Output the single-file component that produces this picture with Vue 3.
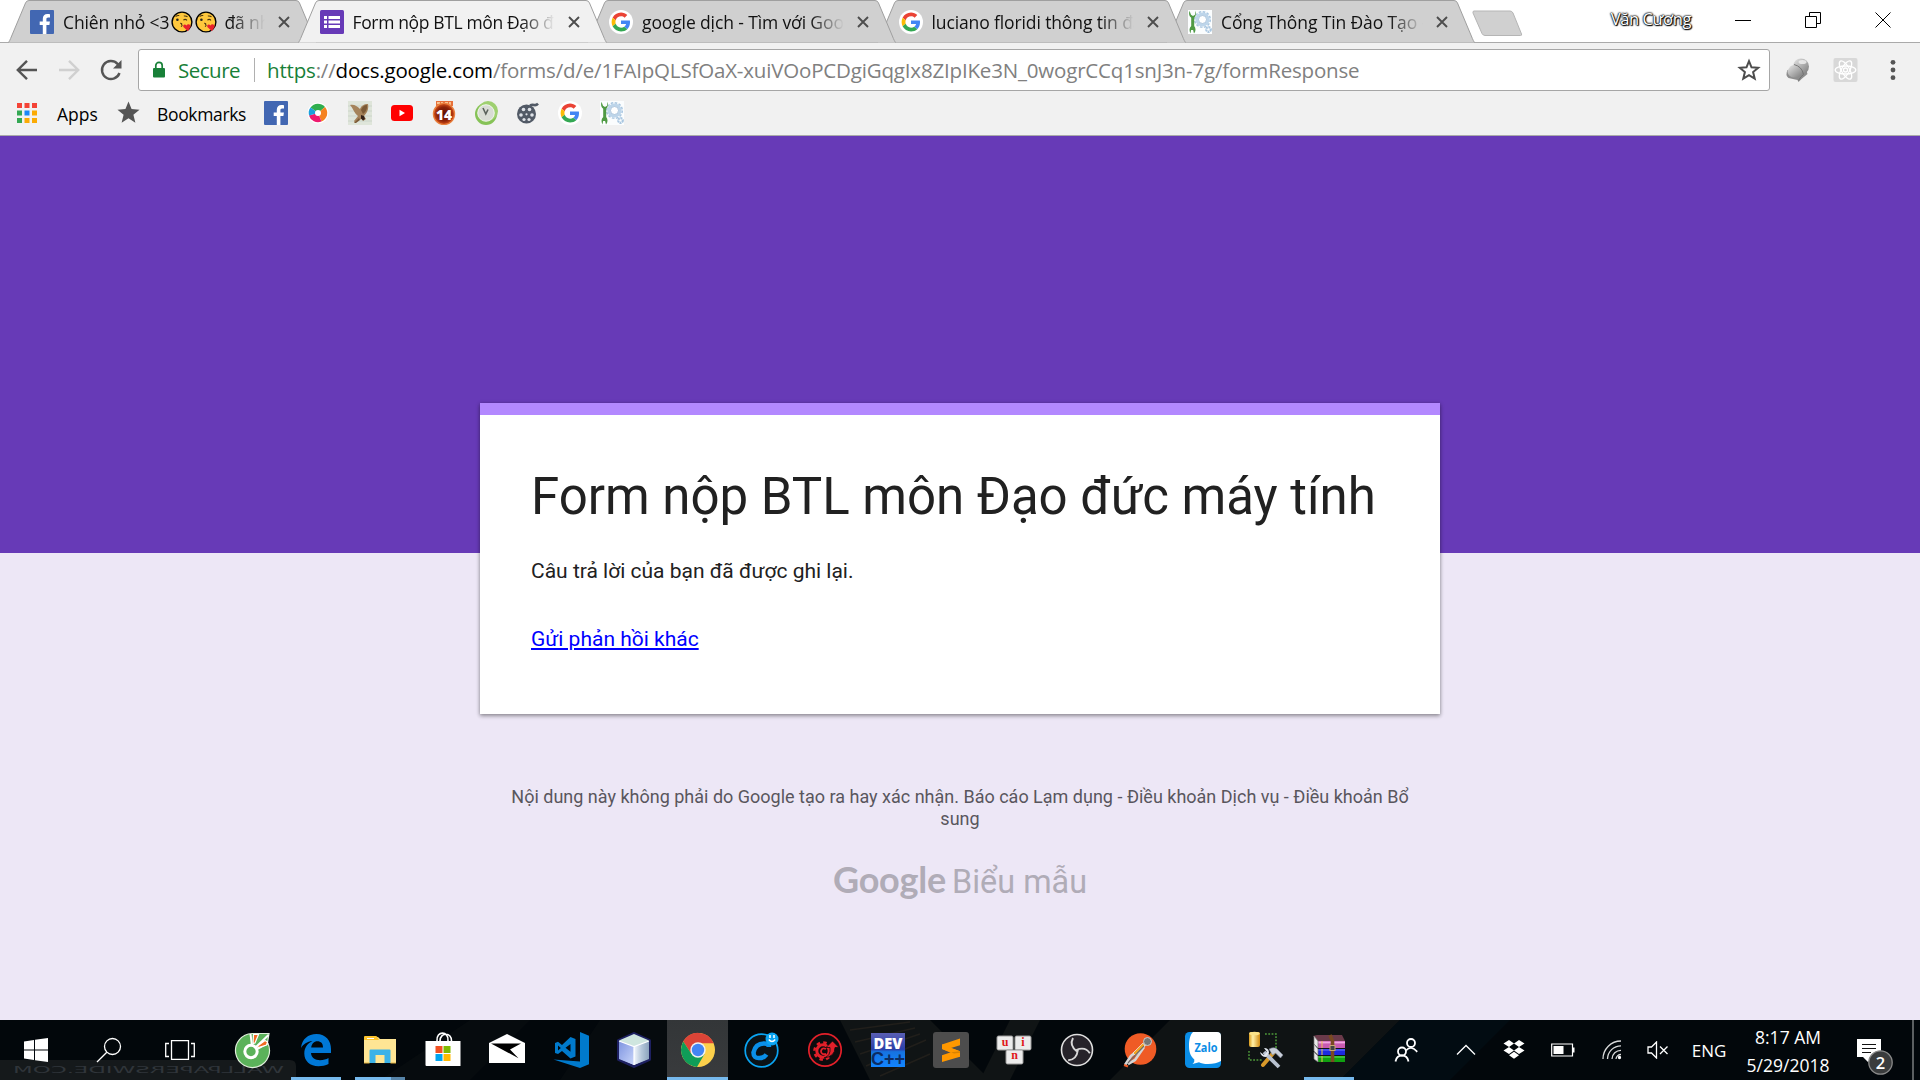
<script setup>
const tabs = [
  { id: 'fb', icon: 'i-facebook', title: 'Chiên nhỏ <3', emoji: true, rest: 'đã nhắc đến' },
  { id: 'form', icon: 'i-form', title: 'Form nộp BTL môn Đạo đức', active: true },
  { id: 'gd', icon: 'i-google', title: 'google dịch - Tìm với Google' },
  { id: 'lf', icon: 'i-google', title: 'luciano floridi thông tin đạo' },
  { id: 'ct', icon: 'i-wrench', title: 'Cổng Thông Tin Đào Tạo -' },
]
const marks = [
  { icon: 'i-facebook' },
  { icon: 'i-pinwheel' },
  { icon: 'i-eagle' },
  { icon: 'i-youtube' },
  { icon: 'i-fourteen', labels: [{ cls: 'l-14', t: '14', at: { x: 12, y: 18.5, textLength: 16, lengthAdjust: 'spacingAndGlyphs' } }] },
  { icon: 'i-vclock' },
  { icon: 'i-reel' },
  { icon: 'i-google' },
  { icon: 'i-wrench' },
]
const apps = [
  { icon: 'a-coccoc' },
  { icon: 'a-edge', run: true },
  { icon: 'a-explorer', run: true, multi: true },
  { icon: 'a-store' },
  { icon: 'a-mail' },
  { icon: 'a-vscode' },
  { icon: 'a-cube' },
  { icon: 'a-chrome', run: true, focus: true },
  { icon: 'a-cfree' },
  { icon: 'a-redgear' },
  {
    icon: 'a-dev',
    labels: [
      { cls: 'l-dev', t: 'DEV', at: { x: 19, y: 17.5, textLength: 29, lengthAdjust: 'spacingAndGlyphs' } },
      { cls: 'l-cpp', t: 'C++', at: { x: 19, y: 34, textLength: 34, lengthAdjust: 'spacingAndGlyphs' } },
    ],
  },
  { icon: 'a-sublime' },
  {
    icon: 'a-unikey',
    labels: [
      { cls: 'l-key', t: 'u', at: { x: 10, y: 14.5 } },
      { cls: 'l-key', t: 'i', at: { x: 28, y: 14.5 } },
      { cls: 'l-key', t: 'n', at: { x: 19.5, y: 28 } },
    ],
  },
  { icon: 'a-obs' },
  { icon: 'a-postman' },
  { icon: 'a-zalo', labels: [{ cls: 'l-zalo', t: 'Zalo', at: { x: 22, y: 21, textLength: 23, lengthAdjust: 'spacingAndGlyphs' } }] },
  { icon: 'a-tools' },
  { icon: 'a-winrar', run: true },
]
</script>

<template>
  <svg class="defs" aria-hidden="true">
    <defs>
      <linearGradient id="g-ball" x1="0" y1="0" x2="1" y2="1"><stop offset="0" stop-color="#e8e8e8" /><stop offset="1" stop-color="#777" /></linearGradient>
      <linearGradient id="g-dev" x1="0" y1="0" x2="0" y2="1"><stop offset="0" stop-color="#5a5fb4" /><stop offset=".48" stop-color="#2b3fa8" /><stop offset=".55" stop-color="#1673e0" /><stop offset="1" stop-color="#1285ff" /></linearGradient>
      <linearGradient id="g-cl" x1="0" y1="0" x2="1" y2="1"><stop offset="0" stop-color="#7e94e0" /><stop offset="1" stop-color="#c9d6fa" /></linearGradient>
      <linearGradient id="g-cr" x1="0" y1="0" x2="1" y2="0"><stop offset="0" stop-color="#f2f7fc" /><stop offset=".5" stop-color="#b5c7da" /><stop offset="1" stop-color="#8ba3bd" /></linearGradient>
      <linearGradient id="g-cyl" x1="0" y1="0" x2="1" y2="0"><stop offset="0" stop-color="#d99a18" /><stop offset=".35" stop-color="#fff0a8" /><stop offset="1" stop-color="#d08a10" /></linearGradient>
      <radialGradient id="g-14"><stop offset="0" stop-color="#5a1206" /><stop offset=".65" stop-color="#8c2208" /><stop offset="1" stop-color="#d9521a" /></radialGradient>
    </defs>
    <symbol id="i-facebook" viewBox="0 0 24 24"><rect width="24" height="24" rx="1" fill="#4267b2" /><path d="M16.400 24V15h3l.5-3.600h-3.500V9.200c0-1.100.4-1.800 1.800-1.800H20V4.200c-.4 0-1.400-.2-2.700-.2-2.700 0-4.500 1.600-4.500 4.700v2.700H9.700V15h3.100v9z" fill="#fff" /></symbol>
    <symbol id="i-form" viewBox="0 0 24 24"><rect width="24" height="24" rx="1.500" fill="#673ab7" /><path d="M4 6h3v3H4zM8.500 6H20v3H8.500zM4 10.500h3v3H4zM8.500 10.500H20v3H8.500zM4 15h3v3H4zM8.500 15H20v3H8.500z" fill="#fff" /></symbol>
    <symbol id="i-google" viewBox="0 0 24 24"><circle cx="12" cy="12" r="12" fill="#fff" /><g transform="translate(2.600 2.600) scale(.392)"><path fill="#ea4335" d="M24 9.500c3.540 0 6.710 1.220 9.210 3.600l6.850-6.850C35.900 2.380 30.470 0 24 0 14.620 0 6.510 5.380 2.560 13.220l7.980 6.190C12.430 13.720 17.740 9.500 24 9.500z" /><path fill="#4285f4" d="M46.980 24.550c0-1.570-.15-3.090-.38-4.550H24v9.020h12.940c-.58 2.960-2.260 5.480-4.780 7.180l7.730 6c4.510-4.180 7.090-10.360 7.090-17.650z" /><path fill="#fbbc05" d="M10.530 28.590c-.48-1.450-.76-2.990-.76-4.590s.27-3.140.76-4.590l-7.980-6.190C.92 16.460 0 20.120 0 24c0 3.880.92 7.540 2.560 10.780l7.970-6.190z" /><path fill="#34a853" d="M24 48c6.480 0 11.930-2.130 15.890-5.810l-7.730-6c-2.150 1.450-4.920 2.300-8.160 2.300-6.260 0-11.570-4.220-13.470-9.910l-7.980 6.190C6.510 42.620 14.620 48 24 48z" /></g></symbol>
    <symbol id="i-wrench" viewBox="0 0 24 24"><rect width="24" height="24" fill="#fbfdfe" /><circle cx="14.500" cy="9.500" r="5.600" fill="none" stroke="#bdd5ea" stroke-width="3" /><circle cx="14.500" cy="9.500" r="7.800" fill="none" stroke="#a9c6e0" stroke-width="1.500" stroke-dasharray="2.600 1.480" /><circle cx="14.500" cy="9.500" r="4" fill="#fff" stroke="#8fb0d0" stroke-width=".7" /><circle cx="20.500" cy="19.500" r="2.300" fill="none" stroke="#a9c6e0" stroke-width="2.200" stroke-dasharray="1.800 .6" /><path d="M1.500.8C.5 4 1.300 6.500 3.200 7.800V16C1.300 17.500.9 20.500 2.500 23.500l.6-3.500h2l.9 3.500c2-2 2-5.500.2-7.500V7.800C8 6.500 8.300 3.200 7 .8v4L5 6 3 4.800z" fill="#4f9a44" /></symbol>
    <symbol id="i-pinwheel" viewBox="0 0 24 24"><circle cx="12" cy="12" r="10.500" fill="#fff" /><path d="M12 12L4.500 6.500A9.300 9.300 0 0 1 19 6z" fill="#2fae4e" /><path d="M12 12l7-6a9.300 9.300 0 0 1-3.500 14.600z" fill="#f58220" /><path d="M12 12l3.500 8.600A9.300 9.300 0 0 1 3 14.500z" fill="#ee1a6e" /><path d="M12 12L3 14.500A9.300 9.300 0 0 1 4.500 6.500z" fill="#1ba0dc" /><circle cx="12" cy="12" r="3" fill="#fff" /></symbol>
    <symbol id="i-eagle" viewBox="0 0 24 24"><rect width="24" height="24" fill="#dfe5da" /><path d="M0 5h24M0 10h24M0 15h24M0 20h24" stroke="#ccd5cb" /><path d="M2 4c4-1 7 1 10 4 1-3 4-5 8-5 1 5-1 9-4 12l2 3-3 2-1-2-3 1-4 3-1-2 4-5C6 12 5 7 2 4z" fill="#a5835a" /><path d="M13 9c1-3 3-5 6-5 .5 4-1 7-4 9zM6 22l5-5 1 2-4 3z" fill="#7b5a36" /><path d="M13 14l3 1 1 3-2 1.500-2-2z" fill="#33221a" /></symbol>
    <symbol id="i-youtube" viewBox="0 0 24 24"><rect x="1" y="4" width="22" height="16" rx="3.500" fill="#f00" /><path d="M9.500 8.800v6.400l5.500-3.200z" fill="#fff" /></symbol>
    <symbol id="i-fourteen" viewBox="0 0 24 24"><rect x="4" width="17" height="5" fill="#e8703a" /><path d="M5 2h3M10 1v4M13 2h3M18 1v3" stroke="#ffe0b0" stroke-width="1.400" /><circle cx="12" cy="13" r="10.600" fill="url(#g-14)" stroke="#e8803e" stroke-width="1.200" /></symbol>
    <symbol id="i-vclock" viewBox="0 0 24 24"><circle cx="12" cy="13" r="11" fill="#86c257" /><circle cx="14" cy="10" r="10" fill="#9fd070" /><circle cx="12" cy="12" r="8.300" fill="#d9dcd5" stroke="#fff" stroke-width=".8" /><path d="M9 7l2.800 6 2.200-4.500" fill="none" stroke="#59605a" stroke-width="1.600" /></symbol>
    <symbol id="i-reel" viewBox="0 0 24 24"><circle cx="10.500" cy="13" r="9.500" fill="#525a66" /><g fill="#dfe3e8"><circle cx="7.500" cy="8.500" r="1.800" /><circle cx="13.500" cy="8.500" r="1.800" /><circle cx="5" cy="14" r="1.800" /><circle cx="16" cy="14" r="1.800" /><circle cx="8" cy="18.500" r="1.600" /><circle cx="13" cy="18.500" r="1.600" /><circle cx="10.500" cy="13.300" r="1.100" /></g><path d="M14 4.500c4-2 5 1.500 8-1.800" fill="none" stroke="#525a66" stroke-width="2.600" /></symbol>
    <symbol id="i-kiss" viewBox="0 0 24 24"><circle cx="12" cy="12" r="10.800" fill="#ffc83d" stroke="#000" stroke-width="1.500" /><circle cx="7" cy="9.500" r="1.400" fill="#222" /><path d="M5 6q2-1.500 4-1M14 5.500q2.500-.5 4 1M13.500 10q2-1.800 4 .2M10 13.500q2.500-.2 1.500 1.400 1.600.7-.6 2.200" fill="none" stroke="#4a3410" stroke-width="1.100" /><path d="M18.500 22l-5-4.500c-1-2.500 1.800-4 3.400-1.600 1.400-2.700 5-1.500 4.400 1.600z" fill="#e8202c" /></symbol>
    <symbol id="i-star" viewBox="0 0 24 24"><path d="M12 .6l3.200 7.800 8.300.600-6.400 5.400 2.100 8.200L12 18.100l-7.200 4.500 2.100-8.200L.5 9l8.300-.6z" /></symbol>

    <symbol id="a-coccoc" viewBox="0 0 38 38"><path d="M19 2.500H36l-1.500 9A17 17 0 1 1 19 2.500z" fill="#5bb25a" stroke="#dfeeda" stroke-width="1.200" /><path d="M17.500 3L19 15M35.500 4L23 16M35 12l-11 6" stroke="#fff" stroke-width="2" /><path d="M20.500 3.500h5L22 12l-2 .5zM32 9.500l2.500 1.500-1 3-8 2.500-1-1.500z" fill="#f26a21" stroke="#fff" stroke-width="1.200" /><circle cx="18" cy="20.500" r="6.200" fill="#5bb25a" stroke="#fff" stroke-width="3" /></symbol>
    <symbol id="a-edge" viewBox="0 0 38 38"><path d="M4 17C5 8 11 3 19.500 3 29 3 34 10 34 18v4H14c.3 5 4.500 7.200 9 7.200 3.500 0 6-.8 8.500-2.200v6c-3 1.500-6.500 2.200-10 2.200C13 35.200 7.300 30 7.300 22.500c0-6 3.500-10.300 8.200-12.500C10 10.500 6.500 13 4 17zM14.200 16.500H26c0-4-2-6.200-5.700-6.200-3.300 0-5.500 2.500-6.100 6.200z" fill="#0078d7" /></symbol>
    <symbol id="a-explorer" viewBox="0 0 38 38"><path d="M3 6h14l2 2h16v24H3z" fill="#ffe594" /><path d="M3 6q0-1 1-1h11q1 0 2 2l1 2H3z" fill="#fcc42e" /><path d="M6 7.500h7" stroke="#fff" stroke-width="1" /><path d="M8.500 32V19.500q0-1 1-1h19q1 0 1 1V32h-6v-8h-9v8z" fill="#3bb2e8" /><path d="M3 32h5.500M29.500 32H35" stroke="#e0b040" /></symbol>
    <symbol id="a-store" viewBox="0 0 38 38"><path d="M13 10C12-.5 25-.5 24 10M16 10C16 1 28 1 27.500 10" fill="none" stroke="#fff" stroke-width="1.600" /><path d="M1.500 10h35v25h-34q-1 0-1-1z" fill="#fff" /><path fill="#f25022" d="M11.500 15h7v7h-7z" /><path fill="#7fba00" d="M19.500 15h7v7h-7z" /><path fill="#00a4ef" d="M11.500 23h7v7h-7z" /><path fill="#ffb900" d="M19.500 23h7v7h-7z" /></symbol>
    <symbol id="a-mail" viewBox="0 0 38 38"><path d="M1 12L19 3l18 9v20H1z" fill="#fff" /><path d="M3 12.500h30L22 18.500l8.500 8.700z" fill="#000" /></symbol>
    <symbol id="a-vscode" viewBox="0 0 38 38"><path d="M28 1l9 3.800v28.500L28 37 1.500 28.500 28 30.500z" fill="#007acc" /><path fill-rule="evenodd" d="M18.500 6l5 2v17.500l-5 2-8.500-7.500-4 3L3 22V12l3-1.200 4 3.200zm0 7l-5 3.800 5 4zM6 14.500v5L8.800 17z" fill="#007acc" /></symbol>
    <symbol id="a-cube" viewBox="0 0 38 38"><path d="M19 2.500L34.500 9.500v19L19 35.500 3.500 28.500v-19z" fill="#c7dbe5" stroke="#1d2060" stroke-width="3" stroke-linejoin="round" /><path d="M19 3L34 9.500 19 15 4 9.500z" fill="#cfe6df" /><path d="M4 10l15 5.500V34L4 28z" fill="url(#g-cl)" /><path d="M34 10l-15 5.500V34l15-6z" fill="url(#g-cr)" /><path d="M19 15v19M4 10l15 5.500L34 10" fill="none" stroke="#fff" stroke-width="1.200" /></symbol>
    <symbol id="a-chrome" viewBox="0 0 38 38"><circle cx="19" cy="19" r="17" fill="#fcd04b" /><path d="M4.280 10.500A17 17 0 0 1 34.700 12.200H19L12.300 22.800z" fill="#db4437" /><path d="M4.280 10.500A17 17 0 0 0 18 36l7.700-13.200L19 26l-6.700-3.200z" fill="#0f9d58" /><circle cx="19" cy="19" r="7.700" fill="#f1f1f1" /><circle cx="19" cy="19" r="6.200" fill="#4285f4" /></symbol>
    <symbol id="a-cfree" viewBox="0 0 38 38"><circle cx="18.500" cy="19.500" r="16.300" fill="#0b1216" stroke="#0aa4f2" stroke-width="1.700" /><path d="M26 16q0-3.500-5-3.500-8.500 0-10.500 9 0 6 6 5.500 4.500 0 7-3.500" fill="none" stroke="#0a8fe8" stroke-width="4.600" /><circle cx="29" cy="8" r="6.500" fill="#0aa4f2" /><path d="M27 4v3M31 4v3M25.800 8.500q3.200 4 6.400 0" fill="none" stroke="#fff" stroke-width="1.500" /></symbol>
    <symbol id="a-redgear" viewBox="0 0 38 38"><circle cx="19" cy="19" r="16.200" fill="#0c0c0e" stroke="#e3202a" stroke-width="1.700" /><circle cx="17" cy="20" r="6.200" fill="none" stroke="#e3202a" stroke-width="3" /><circle cx="17" cy="20" r="8.600" fill="none" stroke="#e3202a" stroke-width="2.500" stroke-dasharray="3.500 3.250" /><path d="M20 18q-4-2-5 2 0 4 5 3" fill="none" stroke="#e3202a" stroke-width="1.800" /><path d="M18 27q7-2 6-10.500h-4l6.500-6.500 6.500 6.500h-4q0 9-11 10.500z" fill="#e3202a" stroke="#0c0c0e" stroke-width=".8" /></symbol>
    <symbol id="a-dev" viewBox="0 0 38 38"><rect x="2" y="2" width="34" height="34" fill="url(#g-dev)" /></symbol>
    <symbol id="a-sublime" viewBox="0 0 38 38"><rect x="1" y="1" width="36" height="36" rx="3" fill="#4d4d4d" /><path d="M10 13.500L28 7.500v6.800L19 17l9 3.200v5.500L10 31v-6.800l9-3-9-3.200z" fill="#ff9800" /><path d="M10 18v-4.500L28 20.200v5.500z" fill="#ff9800" /><path d="M19 21.200l9-1v1.500l-6 .8z" fill="#d98200" /></symbol>
    <symbol id="a-unikey" viewBox="0 0 38 38"><g fill="#ececec" stroke="#999" stroke-width="1"><rect x="2" y="5" width="16" height="14" rx="1.500" /><rect x="20" y="5" width="16" height="14" rx="1.500" /><rect x="11" y="19" width="17" height="14" rx="1.500" /></g></symbol>
    <symbol id="a-obs" viewBox="0 0 38 38"><circle cx="19" cy="19" r="15.500" fill="#26232a" stroke="#e0e0e0" stroke-width="1.600" /><g fill="none" stroke="#d8d8d8" stroke-width="1.900"><path d="M19 20.500q-8-6-4-13.500" /><path d="M19 20.500q-8-6-4-13.500" transform="rotate(120 19 19.500)" /><path d="M19 20.500q-8-6-4-13.500" transform="rotate(240 19 19.500)" /></g></symbol>
    <symbol id="a-postman" viewBox="0 0 38 38"><circle cx="19.500" cy="18" r="15.800" fill="#ef5b25" /><path d="M25 13L10 25l-6 9M23 16l-9 13-7 4" fill="none" stroke="#d5d5d5" stroke-width="2.600" /><path d="M22 12L12 22l2.500 2.500L24 15z" fill="#f5a623" stroke="#eee" stroke-width=".7" /><path d="M23 15L7 32" stroke="#6a6a6a" stroke-width="1.100" /><circle cx="26.500" cy="10.500" r="4" fill="#777" stroke="#ccc" stroke-width="1" /><path d="M3 34l4 1.500" stroke="#ef5b25" stroke-width="2" /></symbol>
    <symbol id="a-zalo" viewBox="0 0 38 38"><rect x="1" y="1" width="36" height="36" rx="4.500" fill="#0a8de6" /><path d="M9 1h24q4 0 4 4v25q-5 3-13 3-6 0-9-1.800L8.500 33q2.500-2 1.800-4.500C6 25 5 20 5 15 5 9 6 4 9 1z" fill="#fff" /></symbol>
    <symbol id="a-tools" viewBox="0 0 38 38"><path d="M18 3h11v14M2 20v9h13" fill="none" stroke="#4f9a3a" stroke-width="1.500" stroke-dasharray="1.800 1.500" /><rect x="2" y="1" width="11" height="15" rx="2" fill="url(#g-cyl)" /><ellipse cx="7.500" cy="2.500" rx="5.300" ry="1.800" fill="#fbe38a" /><path d="M28 20L16 34" stroke="#d99a2a" stroke-width="4" stroke-linecap="round" /><path d="M22 18q6-3 9 1l5 5-2.500 3-5-5-3 2z" fill="#c8ced8" stroke="#7d8798" stroke-width=".6" /><path d="M17 21L32 36" stroke="#b8c2d0" stroke-width="3.800" /><path d="M13 21l4 3 3-3-3-4q5 0 5 5l-3 4q-5 0-6-5z" fill="#dfe5ee" /></symbol>
    <symbol id="a-winrar" viewBox="0 0 38 38"><path d="M3 5l4-1h25l3 6H8z" fill="#6a3a4a" /><path d="M8 10h27v7H8z" fill="#c85ab0" /><path d="M8 11.500h27" stroke="#f0a8e0" stroke-width="1.800" /><path d="M8 18h27v6H8z" fill="#1c2ae0" /><path d="M8 19h27" stroke="#6a78ff" /><path d="M8 25h27v6H8z" fill="#10a010" /><path d="M8 26h27" stroke="#66e060" /><path d="M4 5l4 5v7l-4-4zM4 13l4 5v6l-4-4zM4 21l4 4v6l-4-3z" fill="#e8e8e8" stroke="#777" stroke-width=".7" /><path d="M12 10v7M12 18v6M12 25v6" stroke="#e8c050" stroke-width="1" /><path d="M20 4l2.500 6v21" fill="none" stroke="#7a4a22" stroke-width="3.600" /><rect x="20" y="14.500" width="5" height="5" fill="#444" stroke="#c8a870" stroke-width="1" /></symbol>
  </svg>

  <div class="screen">
    <header class="strip">
      <div class="tabs">
        <div v-for="(t, i) in tabs" :key="t.id" class="tab" :class="[{ active: t.active }, 'z' + i]">
          <svg class="shape" viewBox="0 0 310 43"><path d="M.5 42.500C1.500 41 2 40 2.600 38.500L17.500 3Q18.500.5 21 .5H288Q290.500.5 291.500 3L306.400 38.500C307 40 307.500 41 308.500 42.500" /></svg>
          <svg class="fav"><use :href="'#' + t.icon" /></svg>
          <div class="ttl">
            <span>{{ t.title }}</span>
            <template v-if="t.emoji"><svg class="emo"><use href="#i-kiss" /></svg><svg class="emo"><use href="#i-kiss" /></svg><span class="rest">{{ t.rest }}</span></template>
          </div>
          <svg class="x" viewBox="0 0 12 12"><path d="M1 1l10 10M11 1L1 11" /></svg>
        </div>
        <svg class="newtab" viewBox="0 0 52 27"><path d="M2 1h36q2 0 3 2l8.500 21q.6 1.500-1 1.500H13q-2 0-3-2L1 3Q.5 1 2 1z" /></svg>
      </div>
      <div class="wincontrols">
        <span class="user">Văn Cương</span>
        <svg viewBox="0 0 16 16"><path d="M0 8.500h16" /></svg>
        <svg viewBox="0 0 16 16"><path d="M.5 4.500h11v11H.5zM4.500 4.500V.5h11v11h-4" /></svg>
        <svg viewBox="0 0 16 16"><path d="M.5.5l15 15M15.500.5l-15 15" /></svg>
      </div>
    </header>

    <div class="toolbar">
      <svg class="nav" viewBox="0 0 24 24"><path d="M22 12H3M12 2.800L2.800 12l9.200 9.200" /></svg>
      <svg class="nav off" viewBox="0 0 24 24"><path d="M2 12h19M12 2.800l9.200 9.200-9.200 9.200" /></svg>
      <svg class="nav" viewBox="0 0 24 24"><path d="M20.500 15A9 9 0 1 1 18.500 5.800L21 8.500" /><path class="solid" d="M22.500 2v8.500H14z" /></svg>
      <div class="omnibox">
        <svg class="lock" viewBox="0 0 12 17"><path d="M1 7h10q1 0 1 1v7.500q0 1-1 1H1q-1 0-1-1V8q0-1 1-1z" fill="#188038" /><path d="M2.800 8V4.500a3.200 3.200 0 0 1 6.400 0V8" fill="none" stroke="#188038" stroke-width="1.700" /></svg>
        <span class="secure">Secure</span>
        <i class="sep"></i>
        <span class="url"><b>https</b>://<em>docs.google.com</em>/forms/d/e/1FAIpQLSfOaX-xuiVOoPCDgiGqgIx8ZIpIKe3N_0wogrCCq1snJ3n-7g/formResponse</span>
        <svg class="fav-star" viewBox="0 0 24 24"><path d="M12 3.200l2.500 6.100 6.700.500-5.100 4.300 1.600 6.500L12 17.100l-5.700 3.500 1.600-6.500-5.100-4.300 6.700-.5z" /></svg>
      </div>
      <svg class="ext" viewBox="0 0 24 24"><path d="M2 12Q-.5 17 3 20l9 2 1 2 3-3 6-5-2-6z" fill="#8d8d8d" /><circle cx="15.500" cy="8.500" r="8" fill="url(#g-ball)" /><path d="M2 13q3-7 7-6 5 2 9 9-6 5-12 3-4-2-4-6z" fill="url(#g-ball)" /><path d="M8.500 6.500q8 2 9.500 10-3 2-5 6" fill="none" stroke="#6f6f6f" stroke-width=".9" /><ellipse cx="17" cy="4" rx="4" ry="2" fill="#f0f0f0" opacity=".8" /></svg>
      <svg class="ext react" viewBox="0 0 24 24"><rect width="24" height="24" rx="2" fill="#d8d8d8" /><g fill="none" stroke="#fff" stroke-width="1.300"><ellipse cx="12" cy="12" rx="10.300" ry="4" /><ellipse cx="12" cy="12" rx="10.300" ry="4" transform="rotate(60 12 12)" /><ellipse cx="12" cy="12" rx="10.300" ry="4" transform="rotate(120 12 12)" /><circle cx="12" cy="12" r="2" /></g></svg>
      <svg class="menu" viewBox="0 0 6 22"><circle cx="3" cy="3.300" r="2.400" /><circle cx="3" cy="11" r="2.400" /><circle cx="3" cy="18.700" r="2.400" /></svg>
    </div>

    <div class="bookmarks">
      <svg class="grid" viewBox="0 0 20 20"><path fill="#f44336" d="M0 0h5v5H0zM7.500 0h5v5h-5zM15 0h5v5h-5z" /><path fill="#34a853" d="M0 7.500h5v5H0zM0 15h5v5H0z" /><path fill="#1a88f8" d="M7.500 7.500h5v5h-5z" /><path fill="#fbab05" d="M15 7.500h5v5h-5zM7.500 15h5v5h-5zM15 15h5v5h-5z" /></svg>
      <span class="b-apps">Apps</span>
      <svg class="b-star"><use href="#i-star" /></svg>
      <span class="b-book">Bookmarks</span>
      <div class="marks"><svg v-for="m in marks" :key="m.icon" viewBox="0 0 24 24"><use :href="'#' + m.icon" /><text v-for="l in m.labels" :key="l.t" :class="l.cls" v-bind="l.at">{{ l.t }}</text></svg></div>
    </div>

    <main class="page">
      <section class="card">
        <h1>Form nộp BTL môn Đạo đức máy tính</h1>
        <p>Câu trả lời của bạn đã được ghi lại.</p>
        <a>Gửi phản hồi khác</a>
      </section>
      <p class="legal">Nội dung này không phải do Google tạo ra hay xác nhận. Báo cáo Lạm dụng - Điều khoản Dịch vụ - Điều khoản Bổ sung</p>
      <div class="brand"><span class="goo">Google</span><span class="bm">Biểu mẫu</span></div>
    </main>

    <footer class="taskbar">
      <svg class="wall" viewBox="0 0 1920 60">
        <path d="M380 60L470 0h60l-60 60zM560 60L600 0h70l40 60z" fill="#060b0e" />
        <path d="M840 0h90l60 60H870zM1010 0h30l-30 60h-30z" fill="#101415" />
        <path d="M850 10l60-8M855 22l60-14M860 34l60-20M866 46l60-26M880 56l50-22" stroke="#211f1b" stroke-width="1.500" />
        <path d="M1110 60l60-60h230l-60 60z" fill="#0f1314" />
        <path d="M1340 60l60-60h110l-60 60z" fill="#020c12" />
        <path d="M0 40h290q6 0 6 6v14H0z" fill="#15191b" />
        <g transform="translate(284 53) scale(-1 1)"><text class="mirror" x="0" y="0" textLength="271" lengthAdjust="spacingAndGlyphs">WALLPAPERSWIDE.COM</text></g>
      </svg>
      <div class="slot start"><svg width="24" height="24" viewBox="0 0 24 24"><path d="M0 3.400L10 2v9.400H0zM11 1.800L24 0v11.400H11zM0 12.500h10V22L0 20.600zM11 12.500h13V24l-13-1.800z" fill="#fff" /></svg></div>
      <div class="slot search"><svg width="26" height="26" viewBox="0 0 26 26" class="line"><circle cx="16.500" cy="9.500" r="8" /><path d="M10.800 15.200L1 25" /></svg></div>
      <div class="slot tview"><svg width="30" height="20" viewBox="0 0 30 20" class="line"><path d="M6.500.5h17v19h-17zM4 3.500H.700v13H4M26 3.500h3.300v13H26" /></svg></div>
      <div class="apps">
        <div v-for="a in apps" :key="a.icon" class="app" :class="{ run: a.run, multi: a.multi, focus: a.focus }"><svg viewBox="0 0 38 38"><use :href="'#' + a.icon" /><text v-for="l in a.labels" :key="l.t" :class="l.cls" v-bind="l.at">{{ l.t }}</text></svg></div>
      </div>
      <div class="slot people"><svg width="24" height="24" viewBox="0 0 24 24" class="line b"><circle cx="17" cy="5" r="4" /><path d="M12 12.500q5-5.500 10.500.5l.5 1" /><circle cx="8" cy="13.500" r="4" /><path d="M1.500 23.500q1-6 6.500-6t6.500 6" /></svg></div>
      <div class="slot chev"><svg width="20" height="12" viewBox="0 0 20 12" class="line"><path d="M1 10.500L10 1.500l9 9" /></svg></div>
      <div class="slot dbx"><svg width="22" height="20" viewBox="0 0 22 20"><path d="M6 0l5 3.500L6 7 .5 3.500zM16 0l5.500 3.500L16 7l-5-3.500zM.5 10.500L6 7l5 3.500L6 14zM16 7l5.500 3.500L16 14l-5-3.500zM6 15.300l5-3.500 5 3.500-5 3.500z" fill="#fff" /></svg></div>
      <div class="slot bat"><svg width="24" height="14" viewBox="0 0 24 14"><path d="M.7 1h20.800v12H.7z" fill="none" stroke="#fff" stroke-width="1.200" /><path d="M2.500 3h10v8h-10zM22 4.500h1.500v5H22z" fill="#fff" /></svg></div>
      <div class="slot wifi"><svg width="20" height="20" viewBox="0 0 20 20" class="line"><path d="M1 19A18 18 0 0 1 19 1M5.500 19A13.500 13.500 0 0 1 19 5.800M10 19a9 9 0 0 1 9-8.700M14 19a5 5 0 0 1 5-4.500" opacity=".85" /><circle cx="17.500" cy="17.500" r="1" fill="#fff" /></svg></div>
      <div class="slot vol"><svg width="22" height="18" viewBox="0 0 22 18" class="line"><path d="M1 6h3.500L9.500 1v16l-5-5H1zM13 5.500l7.500 7.500M20.500 5.500L13 13" /></svg></div>
      <div class="slot lang">ENG</div>
      <div class="slot clock"><span class="time">8:17 AM</span><span class="date">5/29/2018</span></div>
      <div class="slot note"><svg width="38" height="38" viewBox="0 0 38 38"><path d="M1 1h24v18H17l-5 5-5-5H1z" fill="#fff" /><path d="M6 6.500h14M6 10.500h14M6 14.500h9" stroke="#111" stroke-width="1.200" /><circle cx="24.500" cy="24.500" r="11.700" fill="#3a3c3d" stroke="#8a8a8a" stroke-width="1.300" /><text class="l-badge" x="24.500" y="30.500">2</text></svg></div>
      <i class="desk"></i>
    </footer>
  </div>
</template>

<style>
body { margin: 0; overflow: hidden; }
</style>

<style scoped>
.defs { position: absolute; width: 0; height: 0; }
.screen { width: 1920px; height: 1080px; display: flex; flex-direction: column; overflow: hidden; font-family: "Open Sans", "Noto Sans", sans-serif; background: #f1f1f1; }
svg { display: block; flex: none; }
.strip { height: 43px; flex: none; box-sizing: border-box; background: #fff; display: flex; justify-content: space-between; box-shadow: inset 0 -1px #aaa; }
.tabs { display: flex; padding-left: 8px; isolation: isolate; }
.tab { position: relative; z-index: 1; width: 310px; height: 43px; margin-right: -20.500px; display: flex; align-items: center; box-sizing: border-box; padding: 1px 0 0 22px; }
.z0 { z-index: 5; }
.z2 { z-index: 4; }
.z3 { z-index: 3; }
.z4 { z-index: 2; }
.tab.active { z-index: 9; }
.shape { position: absolute; left: 0; top: 0; width: 310px; height: 43px; z-index: -1; fill: #d0d0d0; stroke: #9f9f9f; }
.active .shape { fill: #f1f1f1; }
.fav { width: 24px; height: 24px; }
.ttl { margin-left: 9px; width: 202px; display: flex; align-items: center; white-space: nowrap; overflow: hidden; font-size: 17.500px; line-height: 28px; color: #111; letter-spacing: -.12px; mask-image: linear-gradient(90deg, #000 168px, transparent 202px); }
.active .ttl { letter-spacing: -.36px; }
.ttl span { flex: none; }
.emo { width: 22px; height: 22px; margin-left: 2px; }
.rest { margin-left: 7px; }
.x { width: 12px; height: 12px; margin-left: 13px; stroke: #4d4d4d; stroke-width: 1.900; }
.newtab { width: 52px; height: 27px; margin: 10px 0 0 16px; fill: #d0d0d0; stroke: #b5b5b5; }
.wincontrols { display: flex; align-items: flex-start; padding: 12px 29px 0 0; }
.wincontrols svg { width: 16px; height: 16px; fill: none; stroke: #000; margin-left: 54px; }
.wincontrols .user + svg { margin-left: 44px; }
.user { font-size: 16.500px; line-height: 16px; margin-top: -1px; letter-spacing: -.4px; color: #fff; text-shadow: 0 0 2px #000, 0 0 2px #000, 0 0 1px #000, 1px 1px 1px #000; }

.toolbar { height: 43px; flex: none; display: flex; align-items: center; padding: 5px 24px 0 15px; }
.nav { width: 24px; height: 24px; margin-right: 18px; fill: none; stroke: #555; stroke-width: 2.400; }
.nav.off { stroke: #d0d0d0; }
.nav .solid { fill: #555; stroke: none; }
.omnibox { height: 42px; width: 1632px; box-sizing: border-box; margin-left: -3px; border: 1px solid #a6a6a6; border-radius: 3px; background: #fff; display: flex; align-items: center; font-size: 20.500px; }
.lock { width: 12px; height: 17px; margin-left: 14px; }
.secure { color: #188038; margin-left: 13px; width: 63px; padding-top: 1px; letter-spacing: -.5px; }
.sep { width: 1px; height: 24px; background: #b0b0b0; margin: 0 12px 0 13px; }
.url { flex: 1; color: #808080; white-space: nowrap; padding-top: 1px; letter-spacing: -.175px; }
.url b { font-weight: 400; color: #188038; }
.url em { font-style: normal; color: #000; }
.fav-star { width: 24px; height: 24px; margin-right: 8px; fill: none; stroke: #4d4d4d; stroke-width: 2; }
.ext { width: 25px; height: 24px; margin-left: 15px; }
.ext.react { margin-left: 23px; }
.menu { width: 6px; height: 22px; margin-left: 32px; fill: #555; }

.bookmarks { height: 45px; box-sizing: border-box; flex: none; display: flex; align-items: center; padding: 0 0 1px 17px; border-bottom: 1px solid #aaa; font-size: 17.500px; color: #000; }
.bookmarks span { padding-top: 2px; }
.grid { width: 20px; height: 20px; }
.b-apps { margin-left: 20px; width: 41px; }
.b-star { width: 23px; height: 23px; margin-left: 19px; fill: #555; }
.b-book { margin-left: 17px; width: 88px; letter-spacing: -.35px; }
.marks { display: flex; gap: 18px; margin-left: 19px; }
.marks svg { width: 24px; height: 24px; }
.l-14 { text-anchor: middle; font-weight: 800; font-size: 13.500px; fill: #fff; }

.page { height: 884px; flex: none; box-sizing: border-box; padding-top: 267px; background: linear-gradient(#673ab7 417px, #ede7f6 417px); font-family: Roboto, sans-serif; display: flex; flex-direction: column; align-items: center; }
.card { width: 960px; height: 311px; box-sizing: border-box; border-top: 12px solid #b388ff; background: #fff; padding: 51px 51px 0; box-shadow: 0 1px 4px rgba(0, 0, 0, .4), 0 3px 4px rgba(0, 0, 0, .12); }
h1 { margin: 0; font-weight: 400; font-size: 51px; line-height: 61px; letter-spacing: -.03px; color: #212121; white-space: nowrap; }
.card p { margin: 30px 0 0; font-size: 21px; line-height: 28px; color: #212121; }
.card a { display: inline-block; margin-top: 40px; font-size: 21px; line-height: 28px; color: #00f; text-decoration: underline; }
.legal { margin: 72px 0 0; width: 900px; text-align: center; font-size: 18px; line-height: 22px; color: #59565d; }
.brand { display: flex; align-items: baseline; margin-top: 29px; gap: 6px; color: #b0acb7; line-height: 40px; }
.goo { font-family: Lato, sans-serif; font-weight: 700; font-size: 36px; letter-spacing: -.2px; }
.bm { font-size: 32.400px; }

.taskbar { position: relative; height: 60px; flex: none; background: #02070b; display: flex; color: #fff; isolation: isolate; }
.wall { position: absolute; inset: 0; width: 1920px; height: 60px; z-index: -1; }
.mirror { font-family: "DejaVu Sans", sans-serif; font-size: 9px; fill: #30353a; }
.slot { display: flex; align-items: center; justify-content: center; flex: none; white-space: nowrap; }
.line { fill: none; stroke: #fff; stroke-width: 1.300; }
.line.b { stroke-width: 1.800; }
.start { width: 72px; }
.search { width: 73px; }
.tview { width: 70px; }
.apps { display: flex; margin-left: 5.500px; width: 1139.500px; }
.app { width: 63px; flex: none; display: flex; align-items: center; justify-content: center; position: relative; }
.app:nth-child(-n+8) { width: 63.700px; }
.app svg { width: 38px; height: 38px; }
.app.run::after { content: ""; position: absolute; bottom: 0; left: 7px; width: 50px; height: 3px; background: #76b9ed; }
.app.multi::after { background: linear-gradient(90deg, #76b9ed 36px, #5684a8 36px); }
.app.focus { background: linear-gradient(#333638, #393b3d) 1px 0 / 61px 60px no-repeat; }
.app.focus::after { left: 1px; width: 61px; }
.l-dev, .l-cpp, .l-key, .l-zalo, .l-badge { text-anchor: middle; }
.l-dev { font-weight: 800; font-size: 15px; fill: #fff; }
.l-cpp { font-family: "Liberation Sans", sans-serif; font-weight: 700; font-size: 19px; fill: #0c2c62; }
.l-key { font-family: "Liberation Serif", serif; font-weight: 700; font-size: 12px; fill: #e01818; }
.l-zalo { font-weight: 700; font-size: 12px; fill: #0a8de6; }
.l-badge { font-weight: 600; font-size: 16.500px; fill: #fff; }
.people { width: 92px; }
.chev { width: 28px; }
.dbx { width: 68px; }
.bat { width: 30px; }
.wifi { width: 68px; }
.vol { width: 23px; }
.lang { width: 80px; font-size: 17px; }
.clock { width: 78px; flex-direction: column; font-size: 17.500px; line-height: 28px; padding-top: 1px; }
.note { width: 89px; padding: 13px 0 0 6px; box-sizing: border-box; }
.desk { width: 2px; margin-left: -4px; background: #5b5f61; }
</style>
